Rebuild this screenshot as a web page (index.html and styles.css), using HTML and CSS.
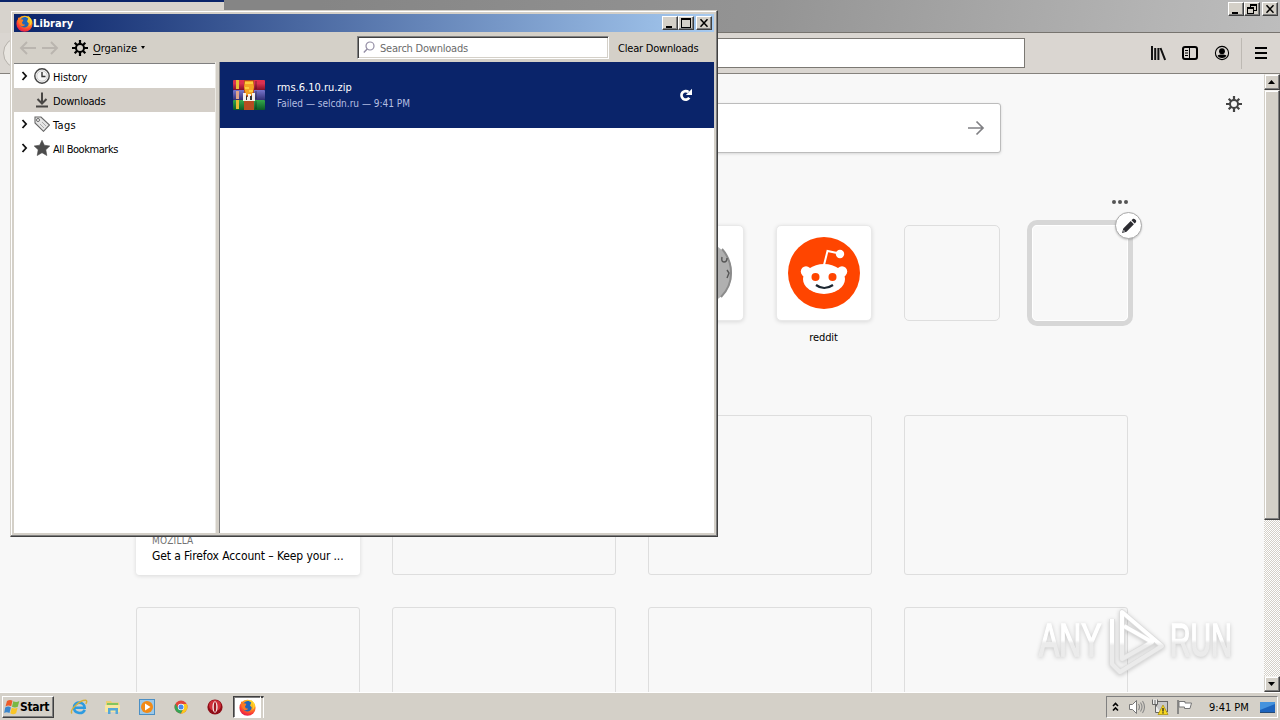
FILE: index.html
```html
<!DOCTYPE html>
<html lang="en">
<head>
<meta charset="utf-8">
<title>Library</title>
<link rel="stylesheet" href="styles.css">
</head>
<body>
<svg class="defs" width="0" height="0">
  <defs>
    <radialGradient id="flame" cx=".65" cy=".2" r=".9"><stop offset="0" stop-color="#ffe226"/><stop offset=".4" stop-color="#ffa01c"/><stop offset=".75" stop-color="#fb3a35"/><stop offset="1" stop-color="#d4145a"/></radialGradient>
    <linearGradient id="bookR" x2="0" y2="1"><stop offset="0" stop-color="#e6314c"/><stop offset=".35" stop-color="#d83252"/><stop offset="1" stop-color="#850f28"/></linearGradient>
    <linearGradient id="bookB" x2="0" y2="1"><stop offset="0" stop-color="#7775cc"/><stop offset="1" stop-color="#323075"/></linearGradient>
    <linearGradient id="bookG" x2="0" y2="1"><stop offset="0" stop-color="#35a84c"/><stop offset="1" stop-color="#0b5a26"/></linearGradient>
    <linearGradient id="mark" x2="0" y2="1"><stop offset=".5" stop-color="#fff"/><stop offset=".56" stop-color="#ebebeb"/></linearGradient>
    <symbol id="firefox" viewBox="0 0 16 16">
      <circle cx="8" cy="8.2" r="7.6" fill="url(#flame)"/>
      <path d="M4.3 4.2C5.8 1.5 9.5 1 11.5 3.4L10.4 6.1 12 8c-.3 2.3-2 3.7-4.2 3.7-2.8 0-4.400-2-4.300-4.300z" fill="#2366b8"/>
      <path d="M2 2.200l2 2 2-.3.9 1.600-1.300 1.400.7 1.700 2.400.6c-.9 1.400-2.800 1.700-4.100.8C2.800 8.700 1.500 5 2 2.200z" fill="#ff7a20"/>
      <path d="M11.500 2c2.200 2 2.800 6.300.6 8.500 2.500-1 3.300-4 2.300-6.400L11.500.8z" fill="#ffd92c"/>
    </symbol>
    <symbol id="gear" viewBox="0 0 16 16">
      <circle cx="8" cy="8" r="4" fill="none" stroke="currentColor" stroke-width="2"/>
      <path d="M8 0v4M8 12v4M0 8h4M12 8h4M2.700 2.700l2.500 2.500M10.800 10.800l2.500 2.500M2.700 13.300l2.500-2.500M10.800 5.200l2.500-2.500" stroke="currentColor" stroke-width="2.200"/>
    </symbol>
    <symbol id="min" viewBox="0 0 12 10"><path d="M2 8h6v2H2z"/></symbol>
    <symbol id="max" viewBox="0 0 12 10"><path fill-rule="evenodd" d="M1 0h10v10H1zM2 2v7h8V2z"/></symbol>
    <symbol id="restore" viewBox="0 0 12 10"><path fill-rule="evenodd" d="M4 0h7v7H8v3H1V3h3zM5 2v1h3v3h2V2zM2 5v4h5V5z"/></symbol>
    <symbol id="close" viewBox="0 0 12 10"><path d="M2.500 1.200l7 7.600M9.500 1.200l-7 7.600" stroke="#000" stroke-width="1.500"/></symbol>
    <symbol id="chev" viewBox="0 0 8 10"><path d="M1.500 1l3.600 4-3.600 4" fill="none" stroke="#111" stroke-width="1.800"/></symbol>
  </defs>
</svg>

<div class="screen">
  <div class="tabstrip">
    <div class="tab"></div>
    <div class="caption main">
      <span class="cb"><svg><use href="#min"/></svg></span><span class="cb"><svg><use href="#restore"/></svg></span><span class="cb gap"><svg><use href="#close"/></svg></span>
    </div>
  </div>
  <div class="navbar">
    <div class="backbtn"></div>
    <div class="urlbar"></div>
    <div class="navicons">
      <svg width="16" height="16" viewBox="0 0 16 16"><path d="M2 1v14M5.200 3v12M8.400 3v12M10.500 3l4.600 12" fill="none" stroke="#111" stroke-width="2"/></svg>
      <svg width="16" height="16" viewBox="0 0 16 16"><rect x="1" y="2" width="14" height="12" rx="2" fill="none" stroke="#000" stroke-width="2"/><path d="M7.500 2v12M3 5.500h3M3 8h3M3 10.500h3" stroke="#000" stroke-width="1"/></svg>
      <svg width="16" height="16" viewBox="0 0 16 16"><circle cx="8" cy="8" r="6.600" fill="none" stroke="#000" stroke-width="1.100"/><circle cx="8" cy="6.200" r="2.900"/><path d="M3.600 10.500C5 9.500 6 9.500 8 9.500s3 0 4.400 1C11.500 12.300 10 13 8 13s-3.500-.7-4.400-2.500z"/></svg>
      <i class="navsep"></i>
      <svg width="14" height="14" viewBox="0 0 14 14"><path d="M1 2h12M1 7h12M1 12h12" stroke="#000" stroke-width="2"/></svg>
    </div>
  </div>

  <div class="viewport">
    <main class="newtab">
      <div class="search"><svg width="18" height="16" viewBox="0 0 18 16"><path d="M1 8h15M9.500 1.500L16 8l-6.500 6.500" fill="none" stroke="#808084" stroke-width="1.700"/></svg></div>
      <div class="topsites">
        <div class="site"><div class="tile white"><svg width="72" height="72" viewBox="0 0 72 72"><ellipse cx="36" cy="36" rx="36" ry="33" fill="#b0b0b0"/><path d="M62 12q9 10 9 24T61 60" fill="none" stroke="#8b8b8b" stroke-width="2"/><path d="M62 20q-1 5 2 5t3-4M67 33l2 3-2 5" fill="none" stroke="#555" stroke-width="1.400"/></svg></div></div>
        <div class="site"><div class="tile white"><svg width="72" height="72" viewBox="0 0 72 72"><circle cx="36" cy="36" r="36" fill="#ff4500"/><g fill="#fff"><circle cx="18" cy="34.500" r="5.200"/><circle cx="54" cy="34.500" r="5.200"/><ellipse cx="36" cy="42" rx="21" ry="15"/><circle cx="52" cy="17" r="4.200"/></g><path d="M36 28l3.500-14 12 2.500" fill="none" stroke="#fff" stroke-width="2"/><circle cx="27.500" cy="40" r="4" fill="#ff4500"/><circle cx="44.500" cy="40" r="4" fill="#ff4500"/><path d="M28 48q8 6 17 0" fill="none" stroke="#1b2630" stroke-width="2.200"/></svg></div><span class="label">reddit</span></div>
        <div class="site"><div class="tile"></div></div>
        <div class="site"><div class="tile hover"></div>
          <svg class="dots" width="18" height="6" viewBox="0 0 18 6"><g fill="#555"><circle cx="3" cy="3" r="2"/><circle cx="9" cy="3" r="2"/><circle cx="15" cy="3" r="2"/></g></svg>
          <span class="edit"><svg width="16" height="16" viewBox="0 0 16 16"><path d="M1 15l1.300-4.500L9.700 3.100l3.200 3.200-7.400 7.400zM10.500 2.300l1-1c.8-.8 1.700-.6 2.400 0l.8.8c.7.800.7 1.600 0 2.400l-1 1z" fill="#2d2d32"/><path d="M2.700 12l1.300 1.300-1.200.4-.5-.5z" fill="#fff"/></svg></span>
        </div>
      </div>
      <div class="cards">
        <div class="card story"><span class="src">MOZILLA</span><span class="headline">Get a Firefox Account – Keep your ...</span></div>
        <div class="card"></div><div class="card"></div><div class="card"></div>
        <div class="card"></div><div class="card"></div><div class="card"></div><div class="card"></div>
      </div>
      <svg class="prefs" width="16" height="16"><use href="#gear"/></svg>
      <svg class="watermark" width="212" height="74" viewBox="0 0 212 74">
        <g class="marktext"><text transform="translate(5 50) scale(.66 1)">ANY</text><text transform="translate(136 50) scale(.62 1)">RUN</text></g>
        <g fill="none" stroke-linejoin="round"><path d="M78 13v45l8 8 42-26L88 6v47l30-17-28-16" stroke="#dcdcdc" stroke-width="5.500"/><path d="M78 13v45l8 8 42-26L88 6v47l30-17-28-16" stroke="url(#mark)" stroke-width="4"/></g>
      </svg>
    </main>
    <div class="scrollbar">
      <span class="sbtn"><svg width="8" height="4" viewBox="0 0 8 4"><path d="M0 4h7L3.500 0z"/></svg></span>
      <span class="thumb"></span><span class="track"></span>
      <span class="sbtn"><svg width="8" height="4" viewBox="0 0 8 4"><path d="M0 0h7L3.500 4z"/></svg></span>
    </div>
  </div>

  <footer class="taskbar">
    <div class="start"><svg width="17" height="16" viewBox="0 0 17 16"><path d="M4 2q3-2 5.500-.3L8.200 7.300q-3-1.500-5.700.2z" fill="#ed5b28"/><path d="M10.300 2.200q3 1.500 6-.2l-1.500 5.700q-2.800 1.500-5.800 0z" fill="#79b843"/><path d="M2.200 8.500q3-1.700 5.700-.1L6.500 14q-3-1.600-5.300 0z" fill="#3b86cc"/><path d="M8.800 8.800q3 1.500 5.800 0l-1.500 5.500q-3 1.700-5.800 0z" fill="#f9c526"/></svg>Start</div>
    <div class="quick">
      <svg width="18" height="18" viewBox="0 0 18 18"><path d="M14.800 11.800C12 17 4 15.500 4 9.500c0-6.500 10.500-6.500 10.700.2H5" fill="none" stroke="#2d9be0" stroke-width="2.600"/><path d="M2 15.500C-1 12 10 2 15.500 2.200c2 .3 1.200 2.300.3 3.600" fill="none" stroke="#d6b03a" stroke-width="1.400"/></svg>
      <svg width="18" height="18" viewBox="0 0 18 18"><path d="M2 3h5l1 1.500h7V14H2z" fill="#edcf70"/><path d="M3 5h11v3H3z" fill="#83c55e"/><path d="M1 7h15v7H1z" fill="#f8e6a0"/><path d="M4 16v-6h10v6h-2.500v-3.500h-5V16z" fill="#55a8d8"/></svg>
      <svg width="18" height="18" viewBox="0 0 18 18"><rect x="1.500" y="1.500" width="15" height="15" fill="#9cc8e8" stroke="#4b8fc4"/><circle cx="9" cy="9" r="6" fill="#f28a16"/><path d="M7 5.500v7L12.500 9z" fill="#fff"/></svg>
      <svg width="18" height="18" viewBox="0 0 18 18"><circle cx="9" cy="9" r="6.500" fill="#e2453a"/><path d="M3.400 5.800A6.500 6.500 0 0 0 9 15.500L11.500 10 6 10z" fill="#35a456"/><path d="M9 15.500A6.500 6.500 0 0 0 14.700 6H9l2.800 4z" fill="#fbc91d"/><circle cx="9" cy="9" r="3.200" fill="#fff"/><circle cx="9" cy="9" r="2.500" fill="#4888ec"/></svg>
      <svg width="18" height="18" viewBox="0 0 18 18"><circle cx="9" cy="9" r="7.600" fill="#8f0d17"/><ellipse cx="9" cy="7.500" rx="6" ry="5.500" fill="#cf2f3a"/><ellipse cx="9" cy="9" rx="2.600" ry="5.800" fill="#f5e9e8"/><ellipse cx="9" cy="9" rx="1.200" ry="5" fill="#a01820"/></svg>
    </div>
    <div class="task"><svg width="17" height="17"><use href="#firefox"/></svg></div><i class="taskedge"></i>
    <div class="tray">
      <svg width="8" height="10" viewBox="0 0 8 10"><path d="M1 4l2.500-2.500L6 4M1 8.500L3.500 6 6 8.500" fill="none" stroke="#000" stroke-width="1.600"/></svg>
      <svg class="vol" width="18" height="16" viewBox="0 0 18 16"><path d="M1.500 5.500h3l4-4v13l-4-4h-3z" fill="#fff" stroke="#777"/><path d="M10.500 5q2 3 0 6M12.500 3.500q3 4.500 0 9M14.500 2q4 6 0 12" fill="none" stroke="#888" stroke-width="1.100"/></svg>
      <svg class="net" width="18" height="16" viewBox="0 0 18 16"><rect x="4.500" y="2.500" width="11" height="10" fill="#c8c8c8" stroke="#666"/><path d="M.5.500v5h5v-5M3 1v4M3.500 6v7.500h5" fill="#eee" stroke="#666"/><path d="M6 15.500L11 6l5 9.500z" fill="#f8d820" stroke="#a98d00" stroke-width=".7"/><path d="M11 9v3.500M11 13.200v1.300" stroke="#222" stroke-width="1.300"/></svg>
      <svg class="flag" width="17" height="16" viewBox="0 0 17 16"><path d="M1 1v14" stroke="#777" stroke-width="1.600"/><path d="M2 2.500h6v1.500h6.500L13 9.500H7.500V8H2z" fill="#fff" stroke="#777"/></svg>
      <span class="clock">9:41 PM</span>
      <svg class="desk" width="17" height="14" viewBox="0 0 17 14"><path d="M0 2h15v10H0z" fill="#1d64bd"/><path d="M0 2h15v2L0 10z" fill="#4593dd"/><path d="M0 12h15v1H0z" fill="#234a78"/></svg>
    </div>
  </footer>

  <section class="window">
    <header class="wtitle"><svg width="17" height="17"><use href="#firefox"/></svg><span class="wname">Library</span>
      <div class="caption"><span class="cb"><svg><use href="#min"/></svg></span><span class="cb"><svg><use href="#max"/></svg></span><span class="cb gap"><svg><use href="#close"/></svg></span></div>
    </header>
    <div class="toolbar">
      <svg class="arrows" width="40" height="16" viewBox="0 0 40 16"><path d="M17 8H2M8 2L2 8l6 6M23 8h15M32 2l6 6-6 6" fill="none" stroke="#bab5af" stroke-width="1.900"/></svg>
      <svg class="tgear" width="16" height="16"><use href="#gear"/></svg>
      <span class="organize"><u>O</u>rganize</span><i class="drop"></i>
      <div class="find"><svg width="12" height="12" viewBox="0 0 12 12"><circle cx="7" cy="5" r="4" fill="none" stroke="#938da4" stroke-width="1.200"/><path d="M4.200 8L.8 11.400" stroke="#938da4" stroke-width="1.400"/></svg><span>Search Downloads</span></div>
      <span class="clear">Clear Downloads</span>
    </div>
    <div class="wbody">
      <nav class="side">
        <div class="item"><svg class="chev" width="8" height="10"><use href="#chev"/></svg><svg width="16" height="16" viewBox="0 0 16 16"><circle cx="8" cy="8" r="7.200" fill="#f6f6f6" stroke="#444" stroke-width="1.400"/><circle cx="8" cy="8" r="5.200" fill="none" stroke="#bbb" stroke-width=".7"/><path d="M8 4v4.500h3.500" fill="none" stroke="#333" stroke-width="1.400"/></svg><span class="t1">History</span></div>
        <div class="item sel"><i class="chev"></i><svg width="16" height="16" viewBox="0 0 16 16"><path d="M8 .5v11M3.500 7L8 11.500 12.500 7M2 14.500h12" fill="none" stroke="#484644" stroke-width="2"/></svg><span class="t2">Downloads</span></div>
        <div class="item"><svg class="chev" width="8" height="10"><use href="#chev"/></svg><svg width="16" height="16" viewBox="0 0 16 16"><path d="M1 1h6l8.500 8-6 6.300L1 7z" fill="#e5e5e5" stroke="#666" stroke-width="1.100"/><circle cx="4" cy="4" r="1.500" fill="#fff" stroke="#666"/><path d="M6 8l4 4M8 6l4 4" stroke="#aaa"/></svg><span class="t3">Tags</span></div>
        <div class="item"><svg class="chev" width="8" height="10"><use href="#chev"/></svg><svg width="16" height="16" viewBox="0 0 16 16"><path d="M8 .3l2.300 4.900 5.500.8-4 3.800 1 5.700L8 12.700l-4.800 2.800 1-5.700-4-3.800 5.500-.8z" fill="#4c4c4c" stroke="#4c4c4c" stroke-width=".6" stroke-linejoin="round"/></svg><span class="t4">All Bookmarks</span></div>
      </nav>
      <div class="splitter"></div>
      <div class="list">
        <div class="download">
          <svg width="32" height="30" viewBox="0 0 32 30"><rect width="32" height="10" rx="1" fill="url(#bookR)"/><rect y="10" width="32" height="10" rx="1" fill="url(#bookB)"/><rect y="20" width="32" height="10" rx="1" fill="url(#bookG)"/><path d="M3 0h3v9H3zM3 20h3v9H3z" fill="#e8bd35"/><path d="M3 11h3v8H3z" fill="#dfa48a"/><path d="M22 1h2v8h-2zM22 11h2v8h-2zM22 21h2v8h-2z" fill="#111" opacity=".25"/><path d="M11 0h10v30H11z" fill="#b84d21"/><path d="M12 1h8l1 6-2 8h-6l-2-8z" fill="#f3a423"/><path d="M12 3h8M12 8h4M16 11h4" stroke="#ffdc48" stroke-width="1.500"/><path d="M10 13h3v4h2v-3h3v3h1v-4h3v8H10z" fill="#f4f0eb"/><path d="M13 16h1v4h-1zM17 16h2v4h-2z" fill="#333"/></svg>
          <div class="info"><span class="name">rms.6.10.ru.zip</span><span class="status">Failed — selcdn.ru — 9:41 PM</span></div>
          <svg class="retry" width="14" height="14" viewBox="0 0 14 14"><path d="M10.300 9.800A4.300 4.300 0 1 1 9.500 4" fill="none" stroke="#fff" stroke-width="2.700"/><path d="M13 .8v6.200H6.800z" fill="#fff"/></svg>
        </div>
      </div>
    </div>
  </section>
</div>
</body>
</html>
```
FILE: styles.css
```css
* { box-sizing: border-box; }
body { margin: 0; width: 1280px; height: 720px; overflow: hidden; font: 11px "DejaVu Sans Condensed", "DejaVu Sans", sans-serif; font-stretch: condensed; color: #000; }
svg { display: block; flex: none; }
.defs { position: absolute; }
.screen { position: relative; height: 720px; display: flex; flex-direction: column; }
.tabstrip { height: 33px; display: flex; justify-content: space-between; background: linear-gradient(100deg, #858585 25%, #949494 60%, #b4b4b4 90%, #bdbdbd); border-bottom: 1px solid #77746f; }
.tab { width: 224px; height: 33px; background: #d7d3cd; border-top: 2px solid #0a246a; }
.caption { display: flex; margin-left: auto; }
.caption.main { padding: 2px 2px 0 0; }
.cb { width: 16px; height: 14px; display: block; padding: 1px 1px 0; background: #d4d0c8; border: 1px solid; border-color: #fff #404040 #404040 #fff; box-shadow: inset -1px -1px #808080; }
.cb svg { width: 12px; height: 10px; }
.gap { margin-left: 2px; }

/* Browser toolbar */
.navbar { height: 41px; display: flex; align-items: center; background: #dad6d1; border-bottom: 1px solid #85827d; }
.backbtn { width: 32px; height: 32px; margin-left: 3px; border: 1px solid #b5b1ab; border-radius: 50%; background: #e8e5e0; }
.urlbar { width: 740px; height: 30px; margin-left: 250px; background: #fff; border: 1px solid #7b7873; }
.navicons { display: flex; align-items: center; margin-left: 125px; gap: 16px; }
.navsep { width: 1px; height: 31px; background: #bdb9b3; margin: 0 -4px 0 -5px; }

/* New tab page */
.viewport { height: 618px; display: flex; background: #f8f8f8; }
.newtab { position: relative; width: 1264px; height: 618px; overflow: hidden; padding: 29px 136px 0; }
.search { width: 737px; height: 50px; margin-left: 128px; display: flex; align-items: center; justify-content: flex-end; padding-right: 15px; background: #fff; border: 1px solid #bcbcbc; border-radius: 3px; box-shadow: 0 1px 3px #0002; }
.topsites { display: flex; justify-content: flex-end; gap: 32px; height: 262px; padding-top: 72px; }
.site { position: relative; width: 96px; display: flex; flex-direction: column; align-items: center; }
.tile { width: 96px; height: 96px; flex: none; display: flex; align-items: center; justify-content: center; border: 1px solid #dedede; border-radius: 5px; }
.tile.white { background: #fff; border-color: #e9e9e9; box-shadow: 0 1px 4px #00000020; }
.tile.hover { border-color: #fff; box-shadow: 0 0 0 5px #d7d7d7; }
.label { margin: 10px 1px 0 0; line-height: 14px; letter-spacing: -.1px; }
.dots { position: absolute; left: 79px; top: -26px; }
.edit { position: absolute; left: 83px; top: -13px; width: 27px; height: 27px; border: 1px solid #aaa; border-radius: 50%; background: #fff; display: flex; align-items: center; justify-content: center; box-shadow: 0 1px 2px #0003; }
.cards { display: grid; grid-template-columns: repeat(4, 224px); grid-auto-rows: 160px; gap: 32px; }
.card { border: 1px solid #dedede; border-radius: 3px; }
.story { display: flex; flex-direction: column; justify-content: flex-end; padding: 0 15px 10px; background: #fff; border-color: #fff; box-shadow: 0 1px 4px #00000020; }
.src { margin-bottom: 1px; font-size: 10px; line-height: 13px; color: #737373; letter-spacing: .2px; }
.headline { font-size: 12px; line-height: 16px; white-space: nowrap; letter-spacing: -.11px; }
.prefs { position: absolute; left: 1226px; top: 22px; color: #444; }
.watermark { position: absolute; left: 1034px; top: 532px; filter: drop-shadow(0 1px 2px #0003); overflow: visible; }
.marktext { font: 46px "Liberation Sans", sans-serif; fill: url(#mark); stroke: url(#mark); stroke-width: 1.5px; }
.scrollbar { width: 16px; display: flex; flex-direction: column; background: repeating-conic-gradient(#d4d0c8 0 25%, #fff 0 50%) 0 0 / 2px 2px; }
.sbtn, .thumb { flex: none; height: 16px; display: flex; align-items: center; justify-content: center; background: #d4d0c8; border: 1px solid; border-color: #f4f2ee #404040 #404040 #d4d0c8; box-shadow: inset -1px -1px #808080, inset 1px 1px #fff; }
.thumb { height: 430px; }
.track { flex: 1; }

/* Taskbar */
.taskbar { height: 28px; display: flex; align-items: flex-start; background: #d4d0c8; border-top: 1px solid #fff; padding: 3px 2px 0; }
.start { width: 52px; height: 22px; display: flex; align-items: center; font-weight: bold; font-size: 12px; letter-spacing: -.35px; border: 1px solid; border-color: #fff #404040 #404040 #fff; box-shadow: inset -1px -1px #808080; }
.quick { display: flex; gap: 16px; margin: 2px 0 0 16px; }
.task { width: 28px; height: 22px; margin-left: 9px; display: flex; align-items: center; justify-content: center; background: #fff; border: 1px solid; border-color: #404040 #fff #fff #404040; box-shadow: inset 1px 1px #808080; }
.taskedge { width: 3px; height: 22px; border-right: 1px solid #fff; border-top: 2px solid #404040; }
.tray { height: 22px; width: 172px; margin-left: auto; display: flex; align-items: center; padding-left: 5px; border: 1px solid; border-color: #808080 #fff #fff #808080; }
.vol { margin-left: 8px; }
.net { margin-left: 6px; }
.flag { margin-left: 7px; }
.clock { margin-left: 15px; width: 43px; white-space: nowrap; }
.desk { margin-left: 8px; }

/* Library window */
.window { position: absolute; left: 10px; top: 10px; width: 708px; height: 527px; padding: 3px; background: #d4d0c8; border: 1px solid; border-color: #d4d0c8 #404040 #404040 #d4d0c8; box-shadow: inset -1px -1px #808080, inset 1px 1px #fff; display: flex; flex-direction: column; }
.wtitle { height: 18px; flex: none; display: flex; align-items: center; padding: 0 2px; background: linear-gradient(90deg, #0a246a, #a6caf0); color: #fff; font-weight: bold; }
.wname { letter-spacing: .1px; }
.toolbar { height: 30px; flex: none; display: flex; align-items: center; padding-top: 1px; }
.arrows { margin-left: 5px; }
.tgear { margin-left: 13px; }
.organize { margin-left: 5px; padding-top: 1px; width: 44px; white-space: nowrap; letter-spacing: -.05px; }
.organize u { text-underline-offset: 2px; }
.drop { margin-left: 4px; border: 2px solid transparent; border-top: 3px solid #000; border-bottom: 0; }
.find { width: 252px; height: 23px; margin: -1px 0 0 212px; padding-left: 5px; display: flex; align-items: center; gap: 5px; background: #fff; border: 1px solid; border-color: #808080 #fff #fff #808080; box-shadow: inset 1px 1px #404040, inset -1px -1px #d4d0c8; color: #6b6b6b; letter-spacing: -.22px; }
.find span { padding-top: 2px; }
.clear { margin-left: 9px; padding-top: 1px; white-space: nowrap; letter-spacing: -.2px; }
.wbody { flex: 1; display: flex; min-height: 0; }
.side { width: 201px; margin-top: 1px; background: #fff; border-top: 1px solid #808080; }
.item { height: 24px; display: flex; align-items: center; padding-left: 7px; white-space: nowrap; }
.sel { background: #d4cfc8; }
.chev { width: 8px; margin-right: 5px; }
.item span { margin-left: 3px; padding-top: 2px; }
.t1 { letter-spacing: -.15px; }
.t2 { letter-spacing: -.22px; }
.t3 { letter-spacing: .35px; }
.t4 { letter-spacing: -.44px; }
.splitter { width: 5px; background: #d4d0c8; border-right: 1px solid #808080; border-left: 1px solid #ebe9e4; }
.list { flex: 1; background: #fff; }
.download { height: 66px; display: flex; align-items: center; padding: 0 21px 0 13px; background: #0a246a; color: #fff; }
.info { margin-left: 12px; display: flex; flex-direction: column; }
.name { line-height: 17px; }
.status { font-size: 10px; line-height: 16px; color: #b4bee0; }
.retry { margin-left: auto; }
```
